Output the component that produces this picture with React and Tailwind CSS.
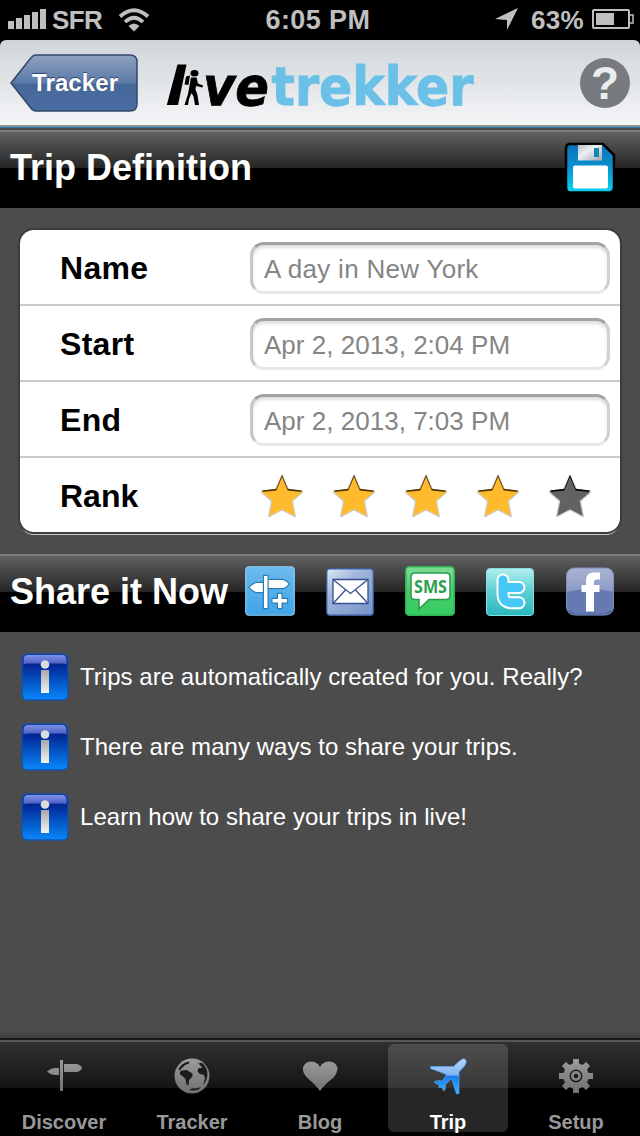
import {useState} from 'react'

const StarIcon=({filled})=>(
  <svg width="46" height="46" viewBox="0 0 46 46">
    <path d="M23 3L29.3 16.8L43.5 18.7L33.2 28L36 43.3L23 36.4L10 43.3L12.8 28L2.5 18.7L16.7 16.8Z" fill="none" stroke="#cfcfcf" strokeWidth="2" strokeLinejoin="round"/>
    <path d="M23 1.7L28.8 15.8L43.2 17.4L40 21H6L2.8 17.4L17.2 15.8Z" fill={filled ? '#4a3205' : '#000'}/>
    <path d="M23 4L28.7 17.4L43 19L32.7 28L35.8 43L23 36.2L10.2 43L13.3 28L3 19L17.3 17.4Z" fill={filled ? '#ffb92c' : '#626262'}/>
  </svg>
)

const SaveIcon=()=>(
  <svg width="52" height="52" viewBox="0 0 52 52">
    <defs>
      <linearGradient id="disk" x1="0" y1="0" x2="0" y2="1">
        <stop offset="0" stopColor="#0c6fb8"/><stop offset=".5" stopColor="#0a93cf"/><stop offset="1" stopColor="#08d5f0"/>
      </linearGradient>
      <linearGradient id="metal" x1="0" y1="0" x2="1" y2="1">
        <stop offset="0" stopColor="#b9bdc4"/><stop offset=".4" stopColor="#eef0f2"/><stop offset="1" stopColor="#9fa5b0"/>
      </linearGradient>
    </defs>
    <path d="M6 2H39L50 13V45Q50 50.5 45 50.5H6Q2 50.5 2 45V7Q2 2 6 2Z" fill="url(#disk)" stroke="#000" strokeWidth="2.5"/>
    <rect x="14" y="3" width="24" height="15.5" fill="url(#metal)"/>
    <rect x="30" y="6" width="5" height="9" fill="#1585b5"/>
    <rect x="9" y="23.5" width="35" height="23" rx="2" fill="#fff"/>
  </svg>
)

const SignIcon=()=>(
  <svg width="50" height="50" viewBox="0 0 50 50">
    <defs>
      <linearGradient id="sign" x1="0" y1="0" x2="0" y2="1">
        <stop offset="0" stopColor="#6cbbee"/><stop offset="1" stopColor="#3fa4e8"/>
      </linearGradient>
    </defs>
    <rect x=".75" y=".75" width="48.5" height="48.5" rx="3.5" fill="url(#sign)" stroke="#8ccdf5" strokeWidth="1.2"/>
    <g fill="#fff" stroke="#2c7cb4" strokeWidth="2.4" strokeLinejoin="round" paintOrder="stroke">
      <path d="M19 17H11Q7 18.5 4.5 21.5Q7 24.5 11 26H19Z"/>
      <path d="M23 14H38Q41.5 15 43.5 18Q41.5 21 38 22H23Z"/>
      <path d="M19 10H22.5V42H19Z"/>
      <path d="M33 28H36.5V33H42V36.5H36.5V42H33V36.5H27.5V33H33Z"/>
    </g>
  </svg>
)

const MailIcon=()=>(
  <svg width="48" height="48" viewBox="0 0 48 48">
    <defs>
      <linearGradient id="mail" x1="0" y1="0" x2=".8" y2="1">
        <stop offset="0" stopColor="#ddebf6"/><stop offset=".4" stopColor="#9fb5d9"/><stop offset="1" stopColor="#7d97ca"/>
      </linearGradient>
    </defs>
    <rect x=".75" y=".75" width="46.5" height="46.5" rx="3" fill="url(#mail)" stroke="#3d5a9a" strokeWidth="1.3"/>
    <g fill="#fff" stroke="#345090" strokeWidth="1.3">
      <path d="M7 11.5H42V35.5H7Z"/>
      <path d="M7 35.5L19.5 22M42 35.5L29.5 22M7 11.5L24.5 25.5L42 11.5" fill="none"/>
    </g>
  </svg>
)

const SmsIcon=()=>(
  <svg width="50" height="50" viewBox="0 0 50 50">
    <defs>
      <linearGradient id="sms" x1="0" y1="0" x2="0" y2="1">
        <stop offset="0" stopColor="#7fdc94"/><stop offset=".5" stopColor="#49cb6c"/><stop offset="1" stopColor="#35cc62"/>
      </linearGradient>
    </defs>
    <rect x=".75" y=".75" width="48.5" height="48.5" rx="3.5" fill="url(#sms)" stroke="#2eb255" strokeWidth="1.5"/>
    <path d="M10 7H41Q45 7 45 11V29.5Q45 33.5 41 33.5H24L14 43V33.5H10Q6 33.5 6 29.5V11Q6 7 10 7Z" fill="#fff" stroke="#2a9a49" strokeWidth="1.5"/>
    <text x="9" y="26.5" textLength="33" lengthAdjust="spacingAndGlyphs" fontFamily="Open Sans" fontWeight="700" fontSize="18" fill="#2c9f4b">SMS</text>
  </svg>
)

const TwitterIcon=()=>(
  <svg width="48" height="48" viewBox="0 0 48 48">
    <defs>
      <linearGradient id="tw" x1="0" y1="0" x2="0" y2="1">
        <stop offset="0" stopColor="#b5eeee"/><stop offset=".45" stopColor="#62d0d3"/><stop offset="1" stopColor="#2bb8bf"/>
      </linearGradient>
    </defs>
    <rect x=".5" y=".5" width="47" height="47" rx="3.5" fill="url(#tw)" stroke="#84dfe1"/>
    <path d="M17 12V26Q17 34.8 26 34.8H33M17 19.5H33" fill="none" stroke="#fff" strokeWidth="13" strokeLinecap="round"/>
    <path d="M17 12V26Q17 34.8 26 34.8H33M17 19.5H33" fill="none" stroke="#46c7f5" strokeWidth="9" strokeLinecap="round"/>
  </svg>
)

const FacebookIcon=()=>(
  <svg width="50" height="50" viewBox="0 0 50 50">
    <defs>
      <linearGradient id="fb" x1="0" y1="0" x2="0" y2="1">
        <stop offset="0" stopColor="#aab4d5"/><stop offset="1" stopColor="#8c99c5"/>
      </linearGradient>
    </defs>
    <rect x="1.5" y="2" width="47" height="47" rx="8" fill="#657ab1"/>
    <path d="M1.5 26Q25 20 48.5 26V10Q48.5 2 40.5 2H9.5Q1.5 2 1.5 10Z" fill="url(#fb)"/>
    <path d="M4 45Q7 48.5 12 48.5H38Q43 48.5 46 45" fill="none" stroke="#3f5b99" strokeWidth="1.5"/>
    <rect x="1.5" y="2" width="47" height="47" rx="8" fill="none" stroke="#8290b9"/>
    <path d="M21 45.5V26H16.5V19H21V14.5Q21 6.5 29 6.5H35V13.5H31.5Q29 13.5 29 16V19H34.5V26H29V45.5Z" fill="#fff"/>
  </svg>
)

const InfoIcon=()=>(
  <svg width="48" height="48" viewBox="0 0 48 48">
    <defs>
      <linearGradient id="info" x1="0" y1="0" x2="0" y2="1">
        <stop offset="0" stopColor="#04218c"/><stop offset=".25" stopColor="#032896"/><stop offset="1" stopColor="#0888fa"/>
      </linearGradient>
      <linearGradient id="gloss" x1="0" y1="0" x2="0" y2="1">
        <stop offset="0" stopColor="#7e91e8"/><stop offset="1" stopColor="#4358bd"/>
      </linearGradient>
      <linearGradient id="bar" x1="0" y1="0" x2="0" y2="1">
        <stop offset="0" stopColor="#a8a8a8"/><stop offset="1" stopColor="#f5f5f5"/>
      </linearGradient>
    </defs>
    <rect x="1" y="1" width="46" height="46" rx="5" fill="url(#info)" stroke="#1650a8" strokeWidth="1.3"/>
    <path d="M2.5 12V7Q2.5 2 7 2H41Q45.5 2 45.5 7V12Q45.5 10.5 41 10.5H7Q2.5 10.5 2.5 12Z" fill="url(#gloss)"/>
    <circle cx="24" cy="11.5" r="4.3" fill="#dcdcdc"/>
    <rect x="20" y="17" width="8" height="23" fill="url(#bar)"/>
  </svg>
)

const DiscoverIcon=()=>(
  <svg width="40" height="40" viewBox="0 0 40 40">
    <path d="M16 4H19V35H16ZM15 12H10Q6 12.5 3 15.5Q6 18.5 10 19H15ZM20 8H33Q37 9 38 12Q37 15 33 16H20Z" fill="url(#gray)"/>
  </svg>
)

const GlobeIcon=()=>(
  <svg width="40" height="40" viewBox="0 0 40 40">
    <circle cx="20" cy="20" r="17.5" fill="url(#gray)"/>
    <g fill="#1b1b1b">
      <path d="M8 15.5L10 14.5L15 14L17 15.5L20.5 17.5L20.5 20.5L17 24L16.5 29.5L14.5 28.5L13.5 23L11 20.5L8 18.5Z"/>
      <path d="M6.5 13Q10 6.5 17.5 5.5L17 7.5Q12.5 8.5 10.5 11.5L7.5 14.5Z"/>
      <path d="M24.5 5.5L27 7.5L29.5 6.5Q35.5 11 35.5 18.5Q35 25 31 29L33 22.5L32 19L28 18L25.5 15.5L26.5 12L30.5 12L28 9Z"/>
      <path d="M17 34Q20 31.5 24 32.5L29 31L26.5 33.5Q22 35 17 34Z"/>
    </g>
  </svg>
)

const HeartIcon=()=>(
  <svg width="40" height="40" viewBox="0 0 40 40">
    <path d="M20 35Q15.5 28.5 8 22.5Q2 17 3 11.5Q5 5.5 11 5.5Q17 5.5 20 11Q23 5.5 29 5.5Q35.5 5.5 37.5 11.5Q38 17 32.5 22.5Q24.5 28.5 20 35Z" fill="url(#gray)"/>
  </svg>
)

const PlaneIcon=()=>(
  <svg width="40" height="40" viewBox="0 0 40 40">
    <defs>
      <linearGradient id="plane" x1="0" y1="0" x2="0" y2="1">
        <stop offset="0" stopColor="#b5d5f8"/><stop offset=".46" stopColor="#84b5f0"/><stop offset=".5" stopColor="#1b7dec"/><stop offset="1" stopColor="#3ab6ff"/>
      </linearGradient>
    </defs>
    <path d="M37.5 3.5Q35.5 1.5 32 4.5L25.5 10.5L2.5 10.5V12.5L18.5 18.5L14.5 25L10.5 24.5L6.5 25.5L7 27L11 29L11 32L13.5 31L15.5 34.5L17 34L17.5 28.5L23.5 22.5L28.5 38L31 37.5L31 16L36.5 10Q39.5 6 37.5 3.5Z" fill="url(#plane)" stroke="#4aa4f5" strokeWidth=".7"/>
  </svg>
)

const GearIcon=()=>(
  <svg width="40" height="40" viewBox="0 0 40 40">
    <g fill="url(#gray)">
      <path fillRule="evenodd" d="M17 3H23V7.5L26.5 9L30 6L34 10L31 13.5L32.5 17H37V23H32.5L31 26.5L34 30L30 34L26.5 31L23 32.5V37H17V32.5L13.5 31L10 34L6 30L9 26.5L7.5 23H3V17H7.5L9 13.5L6 10L10 6L13.5 9L17 7.5ZM20 13.5A6.5 6.5 0 1 0 20 26.5A6.5 6.5 0 1 0 20 13.5Z"/>
      <path fillRule="evenodd" d="M20 15A5 5 0 1 0 20 25A5 5 0 1 0 20 15ZM20 17.7A2.300 2.300 0 1 1 20 22.3A2.300 2.300 0 1 1 20 17.7Z"/>
    </g>
  </svg>
)

const Logo=()=>(
  <svg width="350" height="80" viewBox="0 -16 350 80">
    <g fontFamily="DejaVu Sans" fontWeight="700">
      <path d="M11.5 3.500H20.5L12 44H.8Z" fill="#000"/>
      <text x="37" y="43.5" textLength="66" lengthAdjust="spacingAndGlyphs" fontSize="53" fontStyle="italic" fill="#000" stroke="#000" strokeWidth=".8">ve</text>
      <text x="105.5" y="43.5" textLength="202" lengthAdjust="spacingAndGlyphs" fontSize="53" fill="#6bc0e8" stroke="#6bc0e8" strokeWidth=".9">trekker</text>
    </g>
    <g fill="#000">
      <ellipse cx="28.5" cy="12.3" rx="4" ry="3.2"/>
      <path d="M20 15.5L24 14.5L22.5 24L18.5 23.5Z"/>
      <path d="M25 16.5H30.5L32 22.5L37 24.5L36.5 26.5L30 25L29.5 28.5L31.5 34L33 44H29L27.5 35.5L25.5 32L23 38L22 44H18.5L22 33Z"/>
    </g>
  </svg>
)

const rows=[
  { label: 'Name', value: 'A day in New York', cls: 'tracking-[0.3px]' },
  { label: 'Start', value: 'Apr 2, 2013, 2:04 PM', cls: 'tracking-[0.02px]' },
  { label: 'End', value: 'Apr 2, 2013, 7:03 PM', cls: 'tracking-[0.02px]' },
]

const tips=[
  'Trips are automatically created for you. Really?',
  'There are many ways to share your trips.',
  'Learn how to share your trips in live!',
]

const tabs=[
  { name: 'Discover', Icon: DiscoverIcon },
  { name: 'Tracker', Icon: GlobeIcon },
  { name: 'Blog', Icon: HeartIcon },
  { name: 'Trip', Icon: PlaneIcon },
  { name: 'Setup', Icon: GearIcon },
]

const StatusBar=()=>(
  <div className="grid h-10 grid-cols-3 items-center bg-black text-[26px] font-bold text-[#bfbfbf]">
    <div className="flex items-center pl-2">
      <svg width="38" height="22" viewBox="0 0 38 22" fill="#bfbfbf">
        <path d="M0 12H6V20H0ZM8 9H14V20H8ZM16 6H22V20H16ZM24 3H30V20H24ZM32 0H38V20H32Z"/>
      </svg>
      <span className="ml-1.5 tracking-[-0.6px]">SFR</span>
      <svg className="ml-4" width="32" height="24" viewBox="0 0 32 24">
        <path d="M2 8.5Q16 -4 30 8.5M7 14Q16 5.5 25 14" fill="none" stroke="#bfbfbf" strokeWidth="3.7"/>
        <path d="M10.5 18Q16 13 21.5 18L16 23.5Z" fill="#bfbfbf"/>
      </svg>
    </div>
    <div className="pr-1 text-center text-[27px] tracking-[0.4px]">6:05 PM</div>
    <div className="flex items-center justify-end pr-1.5">
      <svg width="24" height="24" viewBox="0 0 24 24"><path d="M23 0L12 22V12L0 11Z" fill="#bfbfbf"/></svg>
      <span className="ml-3 tracking-[0.3px]">63%</span>
      <svg className="mb-0.5 ml-2" width="42" height="20" viewBox="0 0 42 20">
        <rect x="1" y="1" width="36" height="18" rx="1" fill="none" stroke="#bfbfbf" strokeWidth="2"/>
        <path d="M4 4H22V16H4Z" fill="#bfbfbf"/>
        <path d="M38 6H41V14H38" fill="none" stroke="#bfbfbf" strokeWidth="1.5"/>
      </svg>
    </div>
  </div>
)

const Header=()=>(
  <div className="h-[90px] bg-black">
    <div className="flex h-[85px] items-center rounded-t-[6px] bg-linear-to-b from-[#d0d5d9] to-[#f4f5f7] pl-2.5">
      <button className="relative flex h-[58px] w-32 items-center">
        <svg className="absolute inset-0" width="128" height="58" viewBox="0 0 128 58">
          <defs>
            <linearGradient id="back" x1="0" y1="0" x2="0" y2="1">
              <stop offset="0" stopColor="#8da1bf"/><stop offset=".5" stopColor="#5c7aa9"/><stop offset=".52" stopColor="#466798"/><stop offset="1" stopColor="#4a6da2"/>
            </linearGradient>
          </defs>
          <path d="M26 1H120Q127 1 127 8V50Q127 57 120 57H26Q23 57 20 53L1 29L20 5Q23 1 26 1Z" fill="url(#back)" stroke="#33476a" strokeWidth="1.5"/>
        </svg>
        <span className="relative ml-[22px] text-2xl font-bold tracking-[0.1px] text-white [text-shadow:0_-1px_1px_#2c4263]">Tracker</span>
      </button>
      <div className="mt-1 ml-7"><Logo/></div>
      <button className="ml-16 flex size-[50px] items-center justify-center rounded-full bg-[#777a7e] text-[46px] leading-none font-bold text-[#ebecee]">?</button>
    </div>
    <div className="h-0.5 bg-[#8e8f91]"/>
    <div className="h-px bg-[#2579aa]"/>
    <div className="h-0.5 bg-[#4c4c4c]"/>
  </div>
)

const SectionBar=({title,children})=>(
  <div className="flex h-[78px] items-center border-t-2 border-[#7b7b7b] bg-[linear-gradient(#606060_0,#252525_36px,#000_36px)] pb-1">
    <h2 className="w-[230px] pl-2.5 text-[36px] font-bold whitespace-nowrap text-white">{title}</h2>
    {children}
  </div>
)

const App=()=>{
  const [rank,setRank]=useState(4)
  const [active,setActive]=useState('Trip')

  return (
    <div className="flex h-[1136px] w-[640px] flex-col overflow-hidden bg-[#4c4c4c] font-['Liberation_Sans',Arial,sans-serif]">
      <svg className="absolute size-0">
        <defs>
          <linearGradient id="gray" x1="0" y1="0" x2="0" y2="40" gradientUnits="userSpaceOnUse">
            <stop offset="0" stopColor="#a0a0a0"/><stop offset="1" stopColor="#6c6c6c"/>
          </linearGradient>
        </defs>
      </svg>
      <StatusBar/>
      <Header/>
      <SectionBar title="Trip Definition">
        <button className="ml-auto pr-6"><SaveIcon/></button>
      </SectionBar>

      <div className="mx-5 mt-[22px] mb-[22px] h-[302px] rounded-[14px] bg-white shadow-[0_0_0_2px_#3c3c3c,0_3px_0_0_#c9c9c9]">
        {rows.map((row)=>(
          <div key={row.label} className="flex h-[76px] items-center border-b-2 border-[#cbcbcb] pt-0.5 pr-2.5 pl-10">
            <label className="w-[190px] text-[32px] font-bold tracking-[0.3px] text-black">{row.label}</label>
            <div className="flex h-[52px] flex-1 items-center rounded-[14px] border-[3px] border-t-[#a3a3a3] border-r-[#d0d0d0] border-b-[#e8e8e8] border-l-[#c6c6c6] pt-0.5 pl-[11px] text-[26px] text-[#858585] shadow-[inset_0_3px_3px_#e0e0e0]">
              <span className={row.cls}>{row.value}</span>
            </div>
          </div>
        ))}
        <div className="flex h-[76px] items-center pl-10">
          <label className="w-[186px] text-[32px] font-bold text-black">Rank</label>
          {[1,2,3,4,5].map((n)=>(
            <button key={n} onClick={()=>setRank(n)} className="flex w-[72px] justify-center"><StarIcon filled={n<=rank}/></button>
          ))}
        </div>
      </div>

      <SectionBar title="Share it Now">
        <div className="flex items-center pb-0.5">
          <button className="flex w-20 justify-center"><SignIcon/></button>
          <button className="flex w-20 justify-center pt-0.5"><MailIcon/></button>
          <button className="flex w-20 justify-center"><SmsIcon/></button>
          <button className="flex w-20 justify-center pt-0.5"><TwitterIcon/></button>
          <button className="flex w-20 justify-center"><FacebookIcon/></button>
        </div>
      </SectionBar>

      <div className="flex-1 pt-2.5 pl-[21px]">
        {tips.map((tip)=>(
          <div key={tip} className="flex h-[70px] items-center">
            <InfoIcon/>
            <p className="ml-[11px] text-2xl tracking-[0.04px] text-white">{tip}</p>
          </div>
        ))}
      </div>
      <div className="h-2 bg-linear-to-b from-[#4c4c4c] to-[#404040]"/>

      <div className="flex h-[98px] border-t-2 border-[#191919] bg-[linear-gradient(#565656_0,#565656_2px,#303030_2px,#141414_48px,#000_48px)] pt-1">
        {tabs.map(({name,Icon})=>(
          <button key={name} onClick={()=>setActive(name)} className={`mx-1 flex h-[88px] w-[120px] flex-col items-center rounded-md pt-3 ${name===active ? 'bg-white/15 text-white' : 'text-[#999]'}`}>
            <Icon/>
            <span className="-mb-1 pt-3.5 text-xl leading-6 font-bold">{name}</span>
          </button>
        ))}
      </div>
    </div>
  )
}
export default App
